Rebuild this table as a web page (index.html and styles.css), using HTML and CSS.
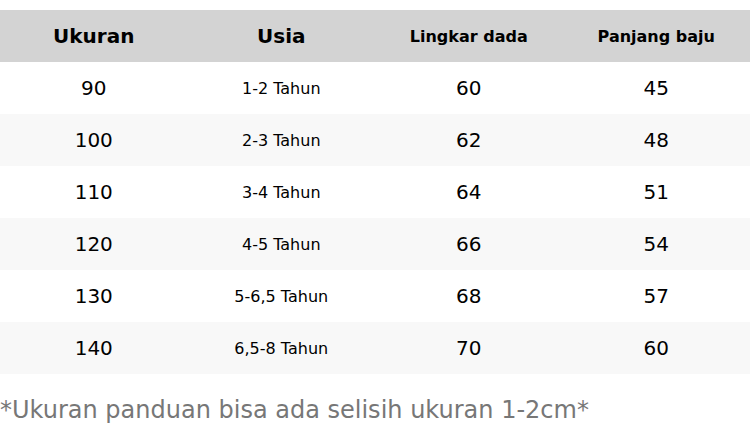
FILE: index.html
```html
<!DOCTYPE html>
<html>
<head>
<meta charset="utf-8">
<link rel="stylesheet" href="styles.css">
</head>
<body>
<div class="page">
<table class="size-table">
<thead>
<tr><th class="big">Ukuran</th><th class="big">Usia</th><th>Lingkar dada</th><th>Panjang baju</th></tr>
</thead>
<tbody>
<tr><td class="num">90</td><td>1-2 Tahun</td><td class="num">60</td><td class="num">45</td></tr>
<tr><td class="num">100</td><td>2-3 Tahun</td><td class="num">62</td><td class="num">48</td></tr>
<tr><td class="num">110</td><td>3-4 Tahun</td><td class="num">64</td><td class="num">51</td></tr>
<tr><td class="num">120</td><td>4-5 Tahun</td><td class="num">66</td><td class="num">54</td></tr>
<tr><td class="num">130</td><td>5-6,5 Tahun</td><td class="num">68</td><td class="num">57</td></tr>
<tr><td class="num">140</td><td>6,5-8 Tahun</td><td class="num">70</td><td class="num">60</td></tr>
</tbody>
</table>
<p class="note">*Ukuran panduan bisa ada selisih ukuran 1-2cm*</p>
</div>
</body>
</html>
```
FILE: styles.css
```css
html, body {
  margin: 0;
  padding: 0;
  background: #ffffff;
}
.page {
  padding-top: 10px;
  font-family: "DejaVu Sans", sans-serif;
  color: #000;
}
.size-table {
  width: 750px;
  border-collapse: collapse;
  table-layout: fixed;
}
.size-table th,
.size-table td {
  height: 52px;
  padding: 0;
  text-align: center;
  vertical-align: middle;
}
.size-table thead tr {
  background: #d3d3d3;
}
.size-table th {
  font-weight: bold;
  font-size: 16px;
}
.size-table th.big {
  font-size: 20px;
}
.size-table td {
  font-size: 16px;
}
.size-table td.num {
  font-size: 20px;
}
.size-table tbody tr:nth-child(even) {
  background: #f8f8f8;
}
.note {
  margin: 22px 0 0 0;
  font-size: 24px;
  line-height: 28px;
  color: #777777;
}
```
